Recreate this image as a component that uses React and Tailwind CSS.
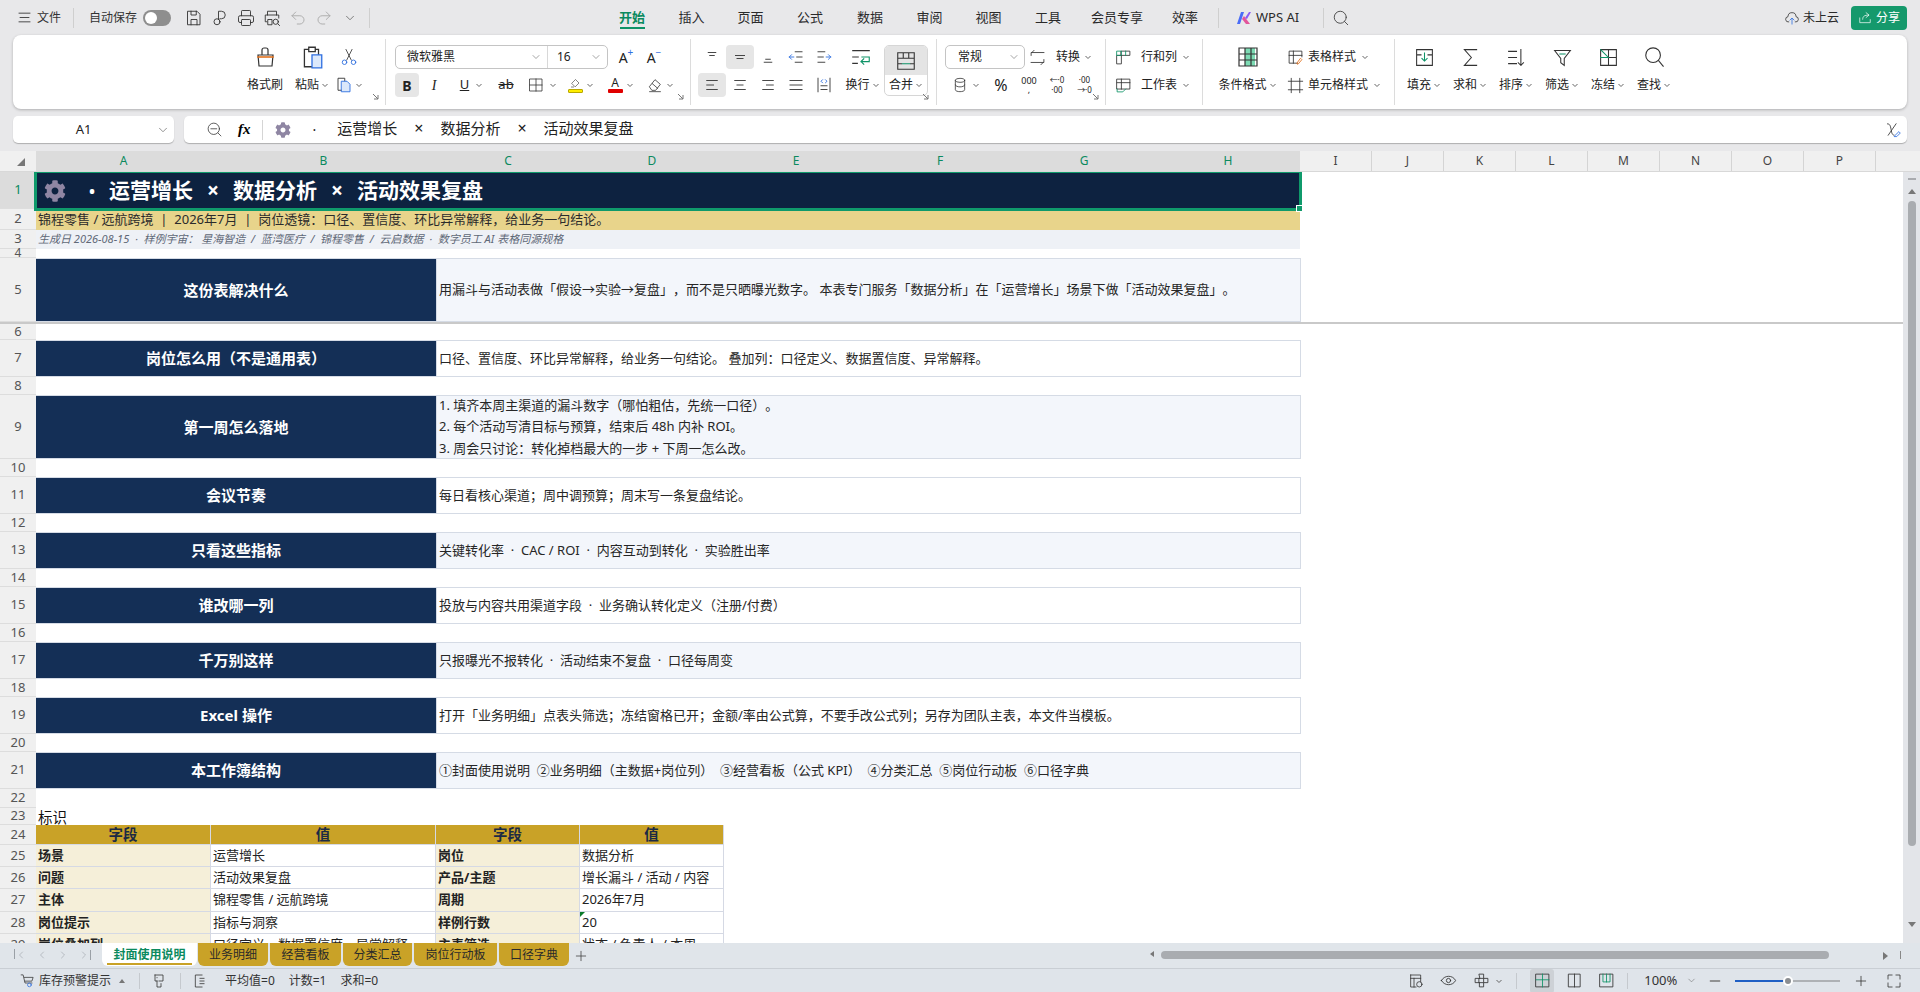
import React from 'react';
import { FaCog } from 'react-icons/fa';
import { Printer, Undo2, Redo2, Search, ChevronDown, Plus, Minus, ChevronLeft, ChevronRight } from 'lucide-react';

// Shared svg wrapper for the hand drawn ribbon icons
const Ic = ({ s = 18, className = 'text-[#333]', sw = 1.2, children }) => (
  <svg width={s} height={s} viewBox="0 0 24 24" fill="none" stroke="currentColor" strokeWidth={sw} strokeLinecap="square" className={`shrink-0 ${className}`}>
    {children}
  </svg>
);

const Chev = () => (
  <svg width="8" height="8" viewBox="0 0 8 8" fill="none" stroke="#666" strokeWidth="1" className="shrink-0">
    <path d="M1.5 3l2.5 2.5L6.5 3" />
  </svg>
);

const Launcher = ({ className }) => (
  <svg width="7" height="7" viewBox="0 0 7 7" fill="none" stroke="#777" strokeWidth="1" className={`absolute bottom-[5px] ${className}`}>
    <path d="M1 1l5 5M6 2v4H2" />
  </svg>
);

const Lines = ({ d, blue }) => (
  <Ic s={18}>
    <path d={d} />
    {blue && <path d={blue} className="text-[#2f6fe0]" stroke="#2f6fe0" />}
  </Ic>
);

const Wide = ({ className = '', children }) => (
  <div className={`flex items-center justify-center shrink-0 h-full ${className}`}>{children}</div>
);

const TopTab = ({ w, active, children }) => (
  <div className={`relative flex h-full items-center justify-center text-[13px] ${w} ${active ? 'text-[#0b8a5e] font-bold' : 'text-[#2a2a2a]'}`}>
    {children}
    {active && <div className="absolute bottom-[6px] left-[18px] right-[17px] h-[2px] bg-[#0e9367]" />}
  </div>
);

function TopBar() {
  return (
    <div className="flex h-[35px] shrink-0 items-center text-[#333]">
      <div className="flex h-full w-[602px] shrink-0 items-center">
        <div className="ml-[18px] flex items-center gap-[6px] text-[12px]">
          <Ic s={13} sw={1.6}><path d="M2 4h20M4 12h16M2 20h20" /></Ic>
          <span>文件</span>
        </div>
        <div className="ml-[12px] h-[20px] w-px bg-[#cfcfcf]" />
        <span className="ml-[15px] text-[12px]">自动保存</span>
        <div className="ml-[6px] flex h-[16px] w-[28px] items-center rounded-full bg-[#8e8e8e] pl-[2px]">
          <div className="h-[12px] w-[12px] rounded-full bg-white" />
        </div>
        <div className="ml-[14px] flex items-center gap-[8px]">
          <Ic><path d="M4 3h12l4 4v14H4zM8 3v5h7V3M8 21v-7h8v7" /></Ic>
          <Ic><circle cx="8" cy="17" r="4" /><path d="M10 14V3h4a5 5 0 0 1 0 10h-2" /></Ic>
          <Printer size={18} strokeWidth={1.2} className="text-[#333]" />
          <Ic><path d="M6 8V3h12v5M5 17H3V8h18v4M7 21h5v-7H7z" /><circle cx="17" cy="17" r="3.5" /><path d="M20 20l2 2" /></Ic>
          <Undo2 size={18} strokeWidth={1.2} className="text-[#a8a8a8]" />
          <Redo2 size={18} strokeWidth={1.2} className="text-[#a8a8a8]" />
          <ChevronDown size={14} strokeWidth={1.4} className="ml-[2px] text-[#666]" />
        </div>
        <div className="ml-[12px] h-[20px] w-px bg-[#cfcfcf]" />
      </div>
      <TopTab w="w-[60px]" active>开始</TopTab>
      <TopTab w="w-[59px]">插入</TopTab>
      <TopTab w="w-[59px]">页面</TopTab>
      <TopTab w="w-[60px]">公式</TopTab>
      <TopTab w="w-[60px]">数据</TopTab>
      <TopTab w="w-[59px]">审阅</TopTab>
      <TopTab w="w-[59px]">视图</TopTab>
      <TopTab w="w-[60px]">工具</TopTab>
      <TopTab w="w-[78px]">会员专享</TopTab>
      <TopTab w="w-[58px]">效率</TopTab>
      <div className="ml-[4px] h-[20px] w-px bg-[#cfcfcf]" />
      <svg width="16" height="14" viewBox="0 0 16 14" className="ml-[17px]">
        <path d="M1 13L5 1h3L4 13z" fill="#4a6cf7" />
        <path d="M6 8l2-3 6 8h-4z" fill="#e2559b" />
        <path d="M9 7l4-6h2l-4 7z" fill="#8a5cf6" />
      </svg>
      <span className="ml-[4px] w-[46px] text-[13px] text-[#2a2a2a]">WPS AI</span>
      <div className="ml-[21px] h-[20px] w-px bg-[#cfcfcf]" />
      <Search size={18} strokeWidth={1.2} className="ml-[8px] text-[#444]" />
      <div className="ml-auto flex items-center gap-[3px] text-[12px] text-[#2a2a2a]">
        <Ic s={16}>
          <path d="M7 18a4 4 0 0 1-1-8 6 6 0 0 1 12 0 4 4 0 0 1-1 8" />
          <path d="M12 21v-8M9 15l3-3 3 3" stroke="#2f6fe0" />
        </Ic>
        <span>未上云</span>
      </div>
      <div className="ml-[12px] mr-[13px] flex h-[24px] w-[56px] items-center justify-center gap-[4px] rounded-[4px] bg-[#15996c] text-[12px] text-white">
        <Ic s={14} className="text-white"><path d="M3 12v8h18v-5M8 14c0-5 3-7 10-7M14 3l5 4-5 4" /></Ic>
        <span>分享</span>
      </div>
    </div>
  );
}

const RibbonCol = ({ w, icon, label, chev = true }) => (
  <div className={`flex shrink-0 flex-col items-center gap-1 ${w}`}>
    <div className="flex h-6 items-center justify-center">{icon}</div>
    <div className="flex h-6 items-center gap-[2px] whitespace-nowrap">
      <span className="flex">{label}</span>
      {chev && <Chev />}
    </div>
  </div>
);

const Group = ({ w, className = '', children }) => (
  <div className={`relative my-1 h-[66px] shrink-0 border-r border-[#dcdcdc] pt-[6px] ${w} ${className}`}>{children}</div>
);

const Row = ({ children }) => <div className="flex h-6 items-center">{children}</div>;

function Ribbon() {
  return (
    <div className="mx-[13px] flex h-[74px] shrink-0 rounded-[8px] bg-white text-[12px] text-[#222] shadow-[0_1px_3px_rgba(0,0,0,0.25)]">
      {/* clipboard */}
      <Group w="w-[373px]" className="flex justify-end pr-[18px]">
        <RibbonCol w="w-[56px]" chev={false} label="格式刷" icon={
          <Ic s={24}><path d="M9 10V5a2 2 0 0 1 2-2h2a2 2 0 0 1 2 2v5M5 10h15l-1 11H6z" /><path d="M5 12h15" stroke="#e2711d" strokeWidth="1.6" /></Ic>
        } />
        <RibbonCol w="w-[38px]" label="粘贴" icon={
          <Ic s={26}><path d="M9 5H5v16h8M15 5h3v5M9 3h6v4H9z" /><path d="M12 10h9v12h-9z" fill="#dbe8fb" stroke="#2f6fe0" /></Ic>
        } />
        <RibbonCol w="w-[36px]" label={<Ic s={18}><path d="M13 19H4V3h9v4" /><path d="M9 7h7l4 4v10H9z" fill="#dbe8fb" stroke="#2f6fe0" /></Ic>} icon={
          <Ic s={18} className="text-[#444]"><path d="M8 2l7 14M16 2L9 16" /><circle cx="6" cy="19" r="3" stroke="#2f6fe0" /><circle cx="18" cy="19" r="3" stroke="#2f6fe0" /></Ic>
        } />
        <Launcher className="right-[6px]" />
      </Group>

      {/* font */}
      <Group w="w-[305px]" className="flex flex-col gap-1 pl-[9px]">
        <Row>
          <div className="flex h-6 w-[213px] shrink-0 rounded-[5px] border border-[#c4c4c4]">
            <div className="flex w-[152px] items-center justify-between border-r border-[#d8d8d8] pl-[11px] pr-[5px]">
              <span>微软雅黑</span><ChevronDown size={12} strokeWidth={1.2} className="text-[#666]" />
            </div>
            <div className="flex flex-1 items-center justify-between pl-[9px] pr-[5px]">
              <span>16</span><ChevronDown size={12} strokeWidth={1.2} className="text-[#666]" />
            </div>
          </div>
          <Wide className="w-[34px] pl-[2px] text-[14px]">A<sup className="text-[10px] text-[#2f6fe0]">+</sup></Wide>
          <Wide className="w-[24px] text-[14px]">A<sup className="text-[10px] text-[#2f6fe0]">−</sup></Wide>
        </Row>
        <Row>
          <Wide className="w-[24px] rounded-[4px] bg-[#e6e6e6] text-[14px] font-bold">B</Wide>
          <Wide className="w-[30px] text-[14px] italic [font-family:'Liberation_Serif',serif]">I</Wide>
          <Wide className="w-[41px] gap-[6px] pl-[4px]"><span className="text-[13px] underline">U</span><Chev /></Wide>
          <Wide className="w-[32px] text-[13px] line-through">ab</Wide>
          <Wide className="w-[40px] gap-[5px]"><Ic s={16}><path d="M3 3h18v18H3zM12 3v18M3 12h18" /></Ic><Chev /></Wide>
          <Wide className="w-[38px] gap-[3px]">
            <div className="flex flex-col items-center">
              <Ic s={12}><path d="M4 12l7-7 7 7-7 7zM3 20h4" /></Ic>
              <div className="h-[4px] w-[15px] rounded-[1px] border border-[#b9a800] bg-[#ffee00]" />
            </div>
            <Chev />
          </Wide>
          <Wide className="w-[41px] gap-[3px]">
            <div className="flex flex-col items-center leading-[12px]">
              <span className="h-[12px] text-[12px]">A</span>
              <div className="h-[4px] w-[15px] rounded-[1px] bg-[#e00000]" />
            </div>
            <Chev />
          </Wide>
          <Wide className="w-[39px] gap-[3px]"><Ic s={16}><path d="M4 14l8-10 8 7-7 9H8zM8 10l8 7M4 22h16" /></Ic><Chev /></Wide>
        </Row>
        <Launcher className="right-[6px]" />
      </Group>

      {/* alignment */}
      <Group w="w-[246px]" className="flex pl-[7px]">
        <div className="flex w-[186px] shrink-0 flex-col gap-1">
          <Row>
            <Wide className="w-[28px]"><Lines d="M7 6h10M9 10h6" /></Wide>
            <Wide className="w-[28px] rounded-[4px] bg-[#e6e6e6]"><Lines d="M6 10h12M8 14h8" /></Wide>
            <Wide className="w-[28px]"><Lines d="M9 15h6M7 19h10" /></Wide>
            <Wide className="w-[28px]"><Lines d="M11 5h9M13 12h7M11 19h9" blue="M9 12H3M6 9l-3 3 3 3" /></Wide>
            <Wide className="w-[28px]"><Lines d="M4 5h9M4 12h7M4 19h9" blue="M15 12h6M18 9l3 3-3 3" /></Wide>
            <Wide className="w-[46px]">
              <Ic s={22}><path d="M3 5h18M3 12h6M3 19h5" /><path d="M13 12h8v5h-9M15 14l-3 3 3 3" stroke="#0e9367" /></Ic>
            </Wide>
          </Row>
          <Row>
            <Wide className="w-[28px] rounded-[4px] bg-[#e6e6e6]"><Lines d="M5 6h14M5 12h9M5 18h14" /></Wide>
            <Wide className="w-[28px]"><Lines d="M5 6h14M8 12h8M5 18h14" /></Wide>
            <Wide className="w-[28px]"><Lines d="M5 6h14M10 12h9M5 18h14" /></Wide>
            <Wide className="w-[28px]"><Lines d="M4 6h16M4 12h16M4 18h16" /></Wide>
            <Wide className="w-[28px]"><Lines d="M4 3v18M20 3v18M8 18h8M8 13h8" blue="M10 5L8 7l2 2M14 5l2 2-2 2" /></Wide>
            <Wide className="w-[46px] gap-[2px] pl-[3px]"><span>换行</span><Chev /></Wide>
          </Row>
        </div>
        <div className="flex h-[51px] w-[44px] shrink-0 flex-col overflow-hidden rounded-[5px] border border-[#d6d6d6]">
          <div className="flex h-[29px] items-center justify-center bg-[#e4e4e4]">
            <Ic s={22}><path d="M3 3h18v18H3zM3 9h18M9 3v6M15 3v6M3 15h4M17 15h4" /><path d="M8 15h8" stroke="#0e9367" /></Ic>
          </div>
          <div className="flex flex-1 items-center justify-center gap-[2px]"><span>合并</span><Chev /></div>
        </div>
        <Launcher className="right-[7px]" />
      </Group>

      {/* number */}
      <Group w="w-[169px]" className="flex flex-col gap-1 pl-[8px]">
        <Row>
          <div className="flex h-6 w-[80px] shrink-0 items-center justify-between rounded-[5px] border border-[#c4c4c4] pl-[12px] pr-[4px]">
            <span>常规</span><ChevronDown size={12} strokeWidth={1.2} className="text-[#666]" />
          </div>
          <div className="ml-[4px] flex items-center">
            <Ic s={17}><path d="M3 9V5h18M7 2L4 5M21 15v4H3M17 22l3-3" /></Ic>
            <span className="ml-[10px]">转换</span>
            <span className="ml-[4px]"><Chev /></span>
          </div>
        </Row>
        <Row>
          <Wide className="w-[42px] gap-[4px]">
            <Ic s={16}><ellipse cx="12" cy="5" rx="7" ry="3" /><path d="M5 5v14c0 4 14 4 14 0V5M5 12c0 4 14 4 14 0" /></Ic><Chev />
          </Wide>
          <Wide className="w-[28px] text-[16px]">%</Wide>
          <Wide className="w-[28px] text-[9px] leading-[9px]"><div className="text-center">000<br />,</div></Wide>
          <Wide className="w-[28px] text-[8px] leading-[10px]"><div className="text-center">←·0<br />·00</div></Wide>
          <Wide className="w-[27px] text-[8px] leading-[10px]"><div className="text-center">·00<br />→·0</div></Wide>
        </Row>
        <Launcher className="right-[6px]" />
      </Group>

      {/* rows and sheets */}
      <Group w="w-[97px]" className="flex flex-col gap-1 pl-[9px]">
        <Row>
          <Ic s={17}><path d="M9 3h12v6H9zM3 9h6v12H3z" /><path d="M3 3h6v6H3zM15 3v6" stroke="#0e9367" /></Ic>
          <span className="ml-[9px]">行和列</span><span className="ml-[5px]"><Chev /></span>
        </Row>
        <Row>
          <Ic s={17}><path d="M3 3h18v14H3zM3 8h18M9 3v14" /><path d="M3 17v4h8l4-4" stroke="#0e9367" /></Ic>
          <span className="ml-[9px]">工作表</span><span className="ml-[5px]"><Chev /></span>
        </Row>
      </Group>

      {/* styles */}
      <Group w="w-[192px]" className="flex pl-[7px]">
        <RibbonCol w="w-[75px]" label="条件格式" icon={
          <Ic s={24}>
            <path d="M9 3h10v18H9z" fill="#7ddbb4" stroke="none" />
            <path d="M3 3h18v18H3zM3 9h18M3 15h18M9 3v18M15 3v18" />
          </Ic>
        } />
        <div className="flex flex-col gap-1 pl-[2px]">
          <Row>
            <Ic s={17}><path d="M15 20H3V3h18v8M3 9h18M9 3v17" /><path d="M14 20l5-7 2 2-5 6z" stroke="#e2711d" /></Ic>
            <span className="ml-[4px]">表格样式</span><span className="ml-[5px]"><Chev /></span>
          </Row>
          <Row>
            <Ic s={17}><path d="M6 2v20M18 2v20M2 6h20M2 18h20" /></Ic>
            <span className="ml-[4px]">单元格样式</span><span className="ml-[5px]"><Chev /></span>
          </Row>
        </div>
      </Group>

      {/* editing */}
      <div className="flex pl-[6px] pt-[10px]">
        <RibbonCol w="w-[46px]" label="填充" icon={<Ic s={21}><path d="M3 3h18v18H3zM3 9h5M16 9h5" /><path d="M12 7v9M9 13l3 3 3-3" stroke="#0e9367" /></Ic>} />
        <RibbonCol w="w-[46px]" label="求和" icon={<Ic s={21}><path d="M19 3H5l8 9-8 9h14" /></Ic>} />
        <RibbonCol w="w-[46px]" label="排序" icon={<Ic s={21}><path d="M3 5h9M3 12h9M3 19h9M17 3v18M14 18l3 3 3-3" /></Ic>} />
        <RibbonCol w="w-[46px]" label="筛选" icon={<Ic s={21}><path d="M3 4h18l-7 9v8l-4-3v-5z" /><path d="M9 8h6" stroke="#0e9367" /></Ic>} />
        <RibbonCol w="w-[46px]" label="冻结" icon={<Ic s={21}><path d="M3 3h18v18H3zM12 3v18M3 12h18" /><path d="M3 3l9 9M3 12h9" stroke="#0e9367" /></Ic>} />
        <RibbonCol w="w-[46px]" label="查找" icon={<Ic s={22}><circle cx="11" cy="10" r="8" /><path d="M17 16l5 6" /></Ic>} />
      </div>
    </div>
  );
}

function FormulaBar() {
  return (
    <div className="mx-[13px] mt-[7px] flex h-[27px] shrink-0 gap-[10px]">
      <div className="relative flex w-[161px] items-center justify-center rounded-[5px] bg-white pr-[20px] text-[13px] text-[#222] shadow-[0_1px_1px_rgba(0,0,0,0.25)]">
        A1
        <ChevronDown size={14} strokeWidth={1.2} className="absolute right-[4px] text-[#666]" />
      </div>
      <div className="flex flex-1 items-center rounded-[5px] bg-white shadow-[0_1px_1px_rgba(0,0,0,0.25)]">
        <Ic s={17} className="ml-[22px] text-[#444]"><circle cx="11" cy="11" r="8" /><path d="M7 11h8M17 17l4 4" /></Ic>
        <span className="ml-[15px] text-[15px] font-bold italic [font-family:'Liberation_Serif',serif]">fx</span>
        <div className="ml-[11px] h-[20px] w-px bg-[#d5d5d5]" />
        <FaCog size={16} className="ml-[12px] text-[#8f86a3]" />
        <span className="ml-[22px] whitespace-pre text-[14px] leading-none text-[#222]">·</span>
        <div className="ml-[21px] flex items-center gap-[17px] pb-[3px] text-[15px] text-[#222]">
          <span>运营增长</span>
          <span className="text-[16px]">×</span>
          <span>数据分析</span>
          <span className="text-[16px]">×</span>
          <span>活动效果复盘</span>
        </div>
        <Ic s={17} className="ml-auto mr-[6px] text-[#333]"><path d="M5 4c3 0 4 2 5 8s2 8 4 8M17 4l-11 16" /><path d="M15 21l6-6 2 2-5 5h-3z" stroke="#2f6fe0" /></Ic>
      </div>
    </div>
  );
}

const colHead = [
  ['A', 'w-[175px]'], ['B', 'w-[225px]'], ['C', 'w-[144px]'], ['D', 'w-[144px]'],
  ['E', 'w-[144px]'], ['F', 'w-[144px]'], ['G', 'w-[144px]'], ['H', 'w-[144px]'],
];

function ColumnHeader() {
  return (
    <div className="mt-[8px] flex h-[21px] shrink-0 border-b border-[#d8d8d8] bg-[#f0f0f0] text-[12px]">
      <div className="flex w-[36px] shrink-0 items-end justify-end pb-[5px] pr-[11px]">
        <div className="h-0 w-0 border-b-[8px] border-l-[8px] border-b-[#777] border-l-transparent" />
      </div>
      {colHead.map(([name, w]) => (
        <div key={name} className={`flex items-center justify-center bg-[#dcdcdc] text-[#0b8a5e] ${w}`}>{name}</div>
      ))}
      {['I', 'J', 'K', 'L', 'M', 'N', 'O', 'P'].map((name) => (
        <div key={name} className="flex w-[72px] items-center justify-center border-r border-[#d4d4d4] text-[#444]">{name}</div>
      ))}
    </div>
  );
}

const RowNum = ({ n, active }) => (
  <div className={`flex w-[36px] shrink-0 items-center justify-center border-b border-[#dddddd] text-[13px] ${active ? 'bg-[#dcdcdc] text-[#0b8a5e]' : 'bg-[#f0f0f0] text-[#555]'}`}>{n}</div>
);

const Blank = ({ n, h }) => (
  <div className={`flex shrink-0 ${h}`}><RowNum n={n} /></div>
);

const Block = ({ n, h, label, tint, children }) => (
  <div className={`flex shrink-0 ${h}`}>
    <RowNum n={n} />
    <div className="flex w-[400px] items-center justify-center border-y border-[#d5dbe5] bg-[#142f56] text-[15px] font-bold text-white">{label}</div>
    <div className={`flex w-[865px] flex-col justify-center whitespace-pre border border-[#d5dbe5] pl-[2px] text-[13px] text-[#262626] ${tint ? 'bg-[#f3f6fb]' : 'bg-white'}`}>{children}</div>
  </div>
);

const fieldRows = [
  { n: 25, h: 'h-[22px]', a: '场景', b: '运营增长', c: '岗位', d: '数据分析' },
  { n: 26, h: 'h-[22px]', a: '问题', b: '活动效果复盘', c: '产品/主题', d: '增长漏斗 / 活动 / 内容' },
  { n: 27, h: 'h-[23px]', a: '主体', b: '锦程零售 / 远航跨境', c: '周期', d: '2026年7月' },
  { n: 28, h: 'h-[22px]', a: '岗位提示', b: '指标与洞察', c: '样例行数', d: '20', mark: true },
  { n: 29, h: 'h-[22px]', a: '岗位叠加列', b: '口径定义、数据置信度、异常解释', c: '主表筛选', d: '状态 / 负责人 / 本周' },
];

const FieldHead = ({ w, children }) => (
  <div className={`flex items-center justify-center border-r border-b border-[#d5d9e4] bg-[#c9a227] text-[14.5px] font-bold text-[#1c2a44] ${w}`}>{children}</div>
);

const FieldCell = ({ w, bold, mark, children }) => (
  <div className={`relative flex items-center overflow-hidden whitespace-nowrap border-r border-b border-[#d5d9e4] pl-[2px] text-[13px] text-[#222] ${w} ${bold ? 'bg-[#f5efd9] font-bold' : 'bg-white'}`}>
    {mark && <div className="absolute left-0 top-0 h-0 w-0 border-r-[5px] border-t-[5px] border-r-transparent border-t-[#0a7a2a]" />}
    {children}
  </div>
);

function Sheet() {
  return (
    <div className="flex min-h-0 flex-1">
      <div className="min-w-0 flex-1 overflow-hidden bg-white">
        <div className="flex h-[37px] shrink-0">
          <RowNum n={1} active />
          <div className="relative z-10 flex w-[1264px] items-center gap-[14px] bg-[#0d2240] pl-[8px] text-[21px] font-bold text-white outline-3 -outline-offset-1 outline-[#0f9a6b]">
            <FaCog size={22} className="text-[#8f86a3]" />
            <span className="ml-[9px] text-[16px]">•</span>
            <span>运营增长</span><span>×</span><span>数据分析</span><span>×</span><span>活动效果复盘</span>
            <div className="absolute -bottom-[3px] -right-[3px] h-[7px] w-[7px] border border-white bg-[#0f9a6b]" />
          </div>
        </div>
        <div className="flex h-[21px] shrink-0">
          <RowNum n={2} />
          <div className="flex w-[1264px] items-center whitespace-pre bg-[#e8d48b] pl-[2px] text-[13px] text-[#2b2b2b]">锦程零售 / 远航跨境  |  2026年7月  |  岗位透镜：口径、置信度、环比异常解释，给业务一句结论。</div>
        </div>
        <div className="flex h-[19px] shrink-0">
          <RowNum n={3} />
          <div className="flex w-[1264px] items-center whitespace-pre bg-[#eef1f6] pl-[2px] text-[11px] italic text-[#5f6877]">生成日 2026-08-15  ·  样例宇宙： 星海智造  /  蓝湾医疗  /  锦程零售  /  云启数据  ·  数字员工 AI 表格同源规格</div>
        </div>
        <Blank n={4} h="h-[9px] [&>div]:text-[12px]" />
        <Block n={5} h="h-[64px]" label="这份表解决什么" tint>用漏斗与活动表做「假设→实验→复盘」，而不是只晒曝光数字。 本表专门服务「数据分析」在「运营增长」场景下做「活动效果复盘」。</Block>
        <div className="flex h-[18px] shrink-0 border-t-2 border-[#c9c9c9]"><RowNum n={6} /></div>
        <Block n={7} h="h-[37px]" label="岗位怎么用（不是通用表）">口径、置信度、环比异常解释，给业务一句结论。 叠加列：口径定义、数据置信度、异常解释。</Block>
        <Blank n={8} h="h-[18px]" />
        <Block n={9} h="h-[64px]" label="第一周怎么落地" tint>
          <div className="leading-[21.5px]">1. 填齐本周主渠道的漏斗数字（哪怕粗估，先统一口径）。</div>
          <div className="leading-[21.5px]">2. 每个活动写清目标与预算，结束后 48h 内补 ROI。</div>
          <div className="leading-[21.5px]">3. 周会只讨论：转化掉档最大的一步 + 下周一怎么改。</div>
        </Block>
        <Blank n={10} h="h-[18px]" />
        <Block n={11} h="h-[37px]" label="会议节奏">每日看核心渠道；周中调预算；周末写一条复盘结论。</Block>
        <Blank n={12} h="h-[18px]" />
        <Block n={13} h="h-[37px]" label="只看这些指标" tint>关键转化率  ·  CAC / ROI  ·  内容互动到转化  ·  实验胜出率</Block>
        <Blank n={14} h="h-[18px]" />
        <Block n={15} h="h-[37px]" label="谁改哪一列">投放与内容共用渠道字段  ·  业务确认转化定义（注册/付费）</Block>
        <Blank n={16} h="h-[18px]" />
        <Block n={17} h="h-[37px]" label="千万别这样" tint>只报曝光不报转化  ·  活动结束不复盘  ·  口径每周变</Block>
        <Blank n={18} h="h-[18px]" />
        <Block n={19} h="h-[37px]" label="Excel 操作">打开「业务明细」点表头筛选；冻结窗格已开；金额/率由公式算，不要手改公式列；另存为团队主表，本文件当模板。</Block>
        <Blank n={20} h="h-[18px]" />
        <Block n={21} h="h-[37px]" label="本工作簿结构" tint>①封面使用说明  ②业务明细（主数据+岗位列）  ③经营看板（公式 KPI）  ④分类汇总  ⑤岗位行动板  ⑥口径字典</Block>
        <Blank n={22} h="h-[19px]" />
        <div className="flex h-[17px] shrink-0">
          <RowNum n={23} />
          <div className="pl-[2px] text-[14.5px] leading-[18px] text-[#111]">标识</div>
        </div>
        <div className="flex h-[20px] shrink-0">
          <RowNum n={24} />
          <FieldHead w="w-[175px]">字段</FieldHead>
          <FieldHead w="w-[225px]">值</FieldHead>
          <FieldHead w="w-[144px]">字段</FieldHead>
          <FieldHead w="w-[144px]">值</FieldHead>
        </div>
        {fieldRows.map((r) => (
          <div key={r.n} className={`flex shrink-0 ${r.h}`}>
            <RowNum n={r.n} />
            <FieldCell w="w-[175px]" bold>{r.a}</FieldCell>
            <FieldCell w="w-[225px]">{r.b}</FieldCell>
            <FieldCell w="w-[144px]" bold>{r.c}</FieldCell>
            <FieldCell w="w-[144px]" mark={r.mark}>{r.d}</FieldCell>
          </div>
        ))}
      </div>
      {/* vertical scrollbar */}
      <div className="flex w-[17px] shrink-0 flex-col items-center bg-[#e3e5e9] pt-[6px]">
        <div className="h-[2px] w-[8px] bg-[#a9abaf]" />
        <div className="mt-[9px] h-0 w-0 border-x-[4px] border-b-[5px] border-x-transparent border-b-[#777]" />
        <div className="mt-[7px] h-[645px] w-[8px] rounded-full bg-[#a9acb0]" />
        <div className="mt-[76px] h-0 w-0 border-x-[4px] border-t-[5px] border-x-transparent border-t-[#777]" />
      </div>
    </div>
  );
}

const SheetTab = ({ w, children }) => (
  <div className={`flex h-[23px] items-center justify-center rounded-b-[6px] bg-[#c9a227] text-[12px] text-[#2a2a2a] ${w}`}>{children}</div>
);

function TabStrip() {
  return (
    <div className="flex h-[25px] shrink-0 items-start bg-[#e0e5ea]">
      <div className="flex h-[23px] w-[102px] shrink-0 items-center gap-[6px] pl-[14px] text-[#9aa0a6]">
        <span className="flex"><span className="h-[10px] w-px bg-[#9aa0a6]" /><ChevronLeft size={12} strokeWidth={1.2} /></span>
        <ChevronLeft size={12} strokeWidth={1.2} className="ml-[3px]" />
        <ChevronRight size={12} strokeWidth={1.2} className="ml-[3px]" />
        <span className="ml-[3px] flex"><ChevronRight size={12} strokeWidth={1.2} /><span className="mt-[1px] h-[10px] w-px bg-[#9aa0a6]" /></span>
      </div>
      <div className="relative flex h-[23px] w-[95px] items-center justify-center rounded-b-[6px] bg-white text-[12px] font-bold text-[#0b8a5e]">
        封面使用说明
        <div className="absolute bottom-[1px] left-[5px] right-[5px] h-[2px] bg-[#c9a227]" />
      </div>
      <div className="ml-px flex gap-[2px]">
        <SheetTab w="w-[70px]">业务明细</SheetTab>
        <SheetTab w="w-[71px]">经营看板</SheetTab>
        <SheetTab w="w-[69px]">分类汇总</SheetTab>
        <SheetTab w="w-[83px]">岗位行动板</SheetTab>
        <SheetTab w="w-[70px]">口径字典</SheetTab>
      </div>
      <Plus size={16} strokeWidth={1.2} className="ml-[4px] mt-[5px] text-[#444]" />
      <div className="ml-[561px] mt-[8px] h-0 w-0 border-y-[3px] border-r-[4px] border-y-transparent border-r-[#777]" />
      <div className="ml-[7px] mt-[8px] h-[8px] w-[668px] rounded-full bg-[#a9acb0]" />
      <div className="ml-[54px] mt-[9px] h-0 w-0 border-y-[4px] border-l-[5px] border-y-transparent border-l-[#777]" />
      <div className="ml-[12px] mt-[8px] h-[8px] w-px bg-[#888]" />
    </div>
  );
}

function StatusBar() {
  return (
    <div className="flex h-[24px] shrink-0 items-center border-t border-[#c9ced4] bg-[#dfe4ea] pl-[20px] text-[12px] text-[#333]">
      <Ic s={15}><path d="M2 3h3l3 13h11M7 7h14l-2 6H8" /><circle cx="15" cy="19" r="3" stroke="#2f6fe0" /></Ic>
      <span className="ml-[4px]">库存预警提示</span>
      <div className="ml-[8px] h-0 w-0 border-x-[3px] border-b-[4px] border-x-transparent border-b-[#777]" />
      <div className="ml-[14px] h-[16px] w-px bg-[#c5c9ce]" />
      <Ic s={16} className="ml-[11px]"><path d="M6 3h12v9h-6M6 3v9h3M9 12v9h6v-5M9 7h.1" /></Ic>
      <div className="ml-[13px] h-[16px] w-px bg-[#c5c9ce]" />
      <Ic s={16} className="ml-[11px]"><path d="M15 3H5v18h10M12 8h6M12 12h6M12 16h6" /></Ic>
      <span className="ml-[17px]">平均值=0</span>
      <span className="ml-[14px]">计数=1</span>
      <span className="ml-[14px]">求和=0</span>

      <Ic s={16} className="ml-[1030px]"><path d="M4 3h15v10M4 3v18h8M4 8h15M9 8v13" /><circle cx="17" cy="17" r="4" /></Ic>
      <Ic s={17} className="ml-[16px]"><path d="M2 12c4-8 16-8 20 0-4 8-16 8-20 0z" /><circle cx="12" cy="12" r="3" /></Ic>
      <div className="ml-[16px] flex items-center gap-[5px]">
        <Ic s={17}><path d="M9 3h6v6h6v6h-6v6H9v-6H3V9h6zM9 9h6v6H9z" /></Ic><Chev />
      </div>
      <div className="ml-[13px] h-[16px] w-px bg-[#c5c9ce]" />
      <div className="ml-[13px] flex h-[24px] w-[24px] items-center justify-center rounded-[3px] bg-[#cdd1d6]">
        <Ic s={17}><path d="M3 3h18v18H3z" /><path d="M12 3v18M3 11h18" stroke="#0e9367" /></Ic>
      </div>
      <Ic s={17} className="ml-[12px]"><path d="M4 3h16v18H4zM12 3v18" /></Ic>
      <Ic s={17} className="ml-[15px]"><path d="M3 3h18v18H3z" /><path d="M7 3v11h10V3M12 3v11" stroke="#0e9367" /></Ic>
      <div className="ml-[12px] h-[16px] w-px bg-[#c5c9ce]" />
      <span className="ml-[16px] text-[13px]">100%</span>
      <ChevronDown size={11} strokeWidth={1.2} className="ml-[9px] text-[#666]" />
      <Minus size={16} strokeWidth={2} className="ml-[10px] text-[#777]" />
      <div className="relative ml-[12px] h-[2px] w-[105px] bg-[#aeb1b5]">
        <div className="h-[2px] w-[52px] bg-[#1f5fc4]" />
        <div className="absolute left-[48px] top-[-4px] h-[10px] w-[10px] rounded-full border-[2px] border-white bg-[#8a8d91]" />
      </div>
      <Plus size={16} strokeWidth={1.2} className="ml-[13px] text-[#333]" />
      <Ic s={16} className="ml-[17px]"><path d="M15 3h6v6M9 21H3v-6M3 9V3h6M21 15v6h-6" /></Ic>
    </div>
  );
}

export default function App() {
  return (
    <div className="flex h-[992px] w-[1920px] flex-col overflow-hidden bg-[#e8e8ea] [font-family:'Noto_Sans','Noto_Sans_CJK_SC',sans-serif] [text-spacing-trim:space-all]">
      <TopBar />
      <Ribbon />
      <FormulaBar />
      <ColumnHeader />
      <Sheet />
      <TabStrip />
      <StatusBar />
    </div>
  );
}
